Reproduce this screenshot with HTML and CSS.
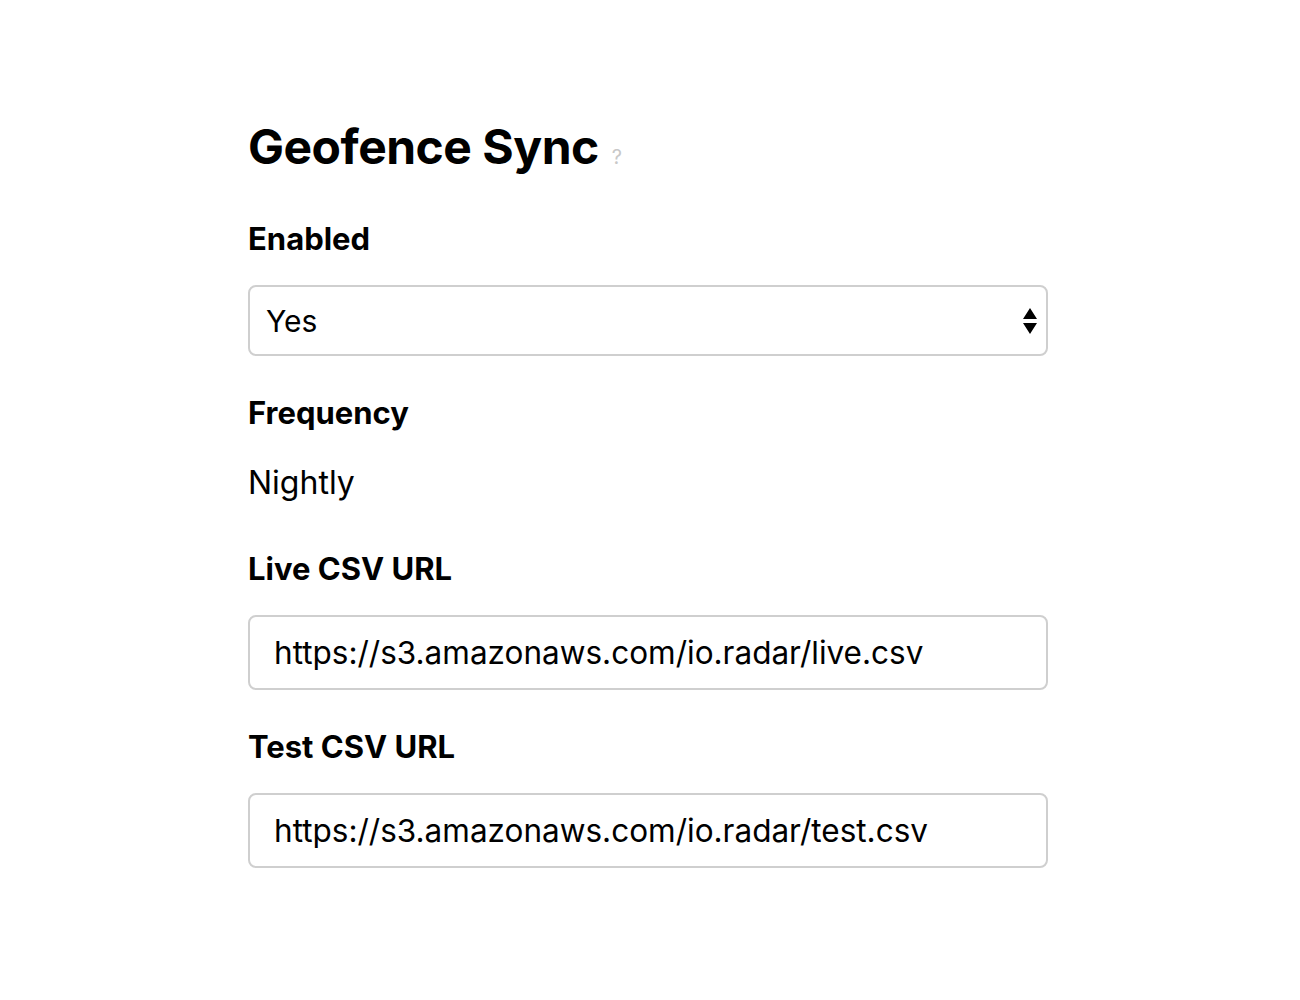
FILE: index.html
```html
<!DOCTYPE html>
<html lang="en">
<head>
<meta charset="utf-8">
<title>Geofence Sync</title>
<link rel="stylesheet" href="styles.css">
</head>
<body>
<main class="page">
  <h1 class="title">Geofence Sync <span class="help">?</span></h1>
  <section class="field">
    <div class="label">Enabled</div>
    <div class="select">
      <span class="select-value">Yes</span>
      <svg class="arrows" width="16" height="30" viewBox="0 0 16 30"><path d="M8 2 L15 13 L1 13 Z M1 17 L15 17 L8 28 Z" fill="#000"/></svg>
    </div>
  </section>
  <section class="field">
    <div class="label">Frequency</div>
    <div class="value">Nightly</div>
  </section>
  <section class="field">
    <div class="label">Live CSV URL</div>
    <div class="input">https://s3.amazonaws.com/io.radar/live.csv</div>
  </section>
  <section class="field">
    <div class="label">Test CSV URL</div>
    <div class="input">https://s3.amazonaws.com/io.radar/test.csv</div>
  </section>
</main>
</body>
</html>
```

FILE: styles.css
```css
html, body {
  margin: 0;
  padding: 0;
  background: #fff;
}
body {
  font-family: Inter, "Liberation Sans", sans-serif;
  color: #000;
}
.page {
  width: 800px;
  margin-left: 248px;
  padding-top: 118px;
}
.title {
  margin: 0 0 33px 0;
  font-size: 48px;
  font-weight: 700;
  line-height: 58px;
  letter-spacing: -0.5px;
}
.help {
  font-size: 20px;
  font-weight: 400;
  color: #c8c8c8;
  margin-left: 2px;
  letter-spacing: 0;
}
.field {
  margin-bottom: 37px;
}
.label {
  font-size: 31px;
  font-weight: 700;
  line-height: 40px;
  margin-bottom: 26px;
}
.select {
  box-sizing: border-box;
  height: 71px;
  border: 2px solid #cfcfcf;
  border-radius: 8px;
  display: flex;
  align-items: center;
  justify-content: space-between;
  padding: 0 8px 0 16px;
  font-size: 30px;
}
.value {
  font-size: 32px;
  line-height: 40px;
  padding-top: 4px;
  padding-bottom: 9px;
}
.input {
  box-sizing: border-box;
  height: 75px;
  border: 2px solid #cfcfcf;
  border-radius: 8px;
  display: flex;
  align-items: center;
  padding: 0 24px;
  font-size: 31.5px;
}
```
